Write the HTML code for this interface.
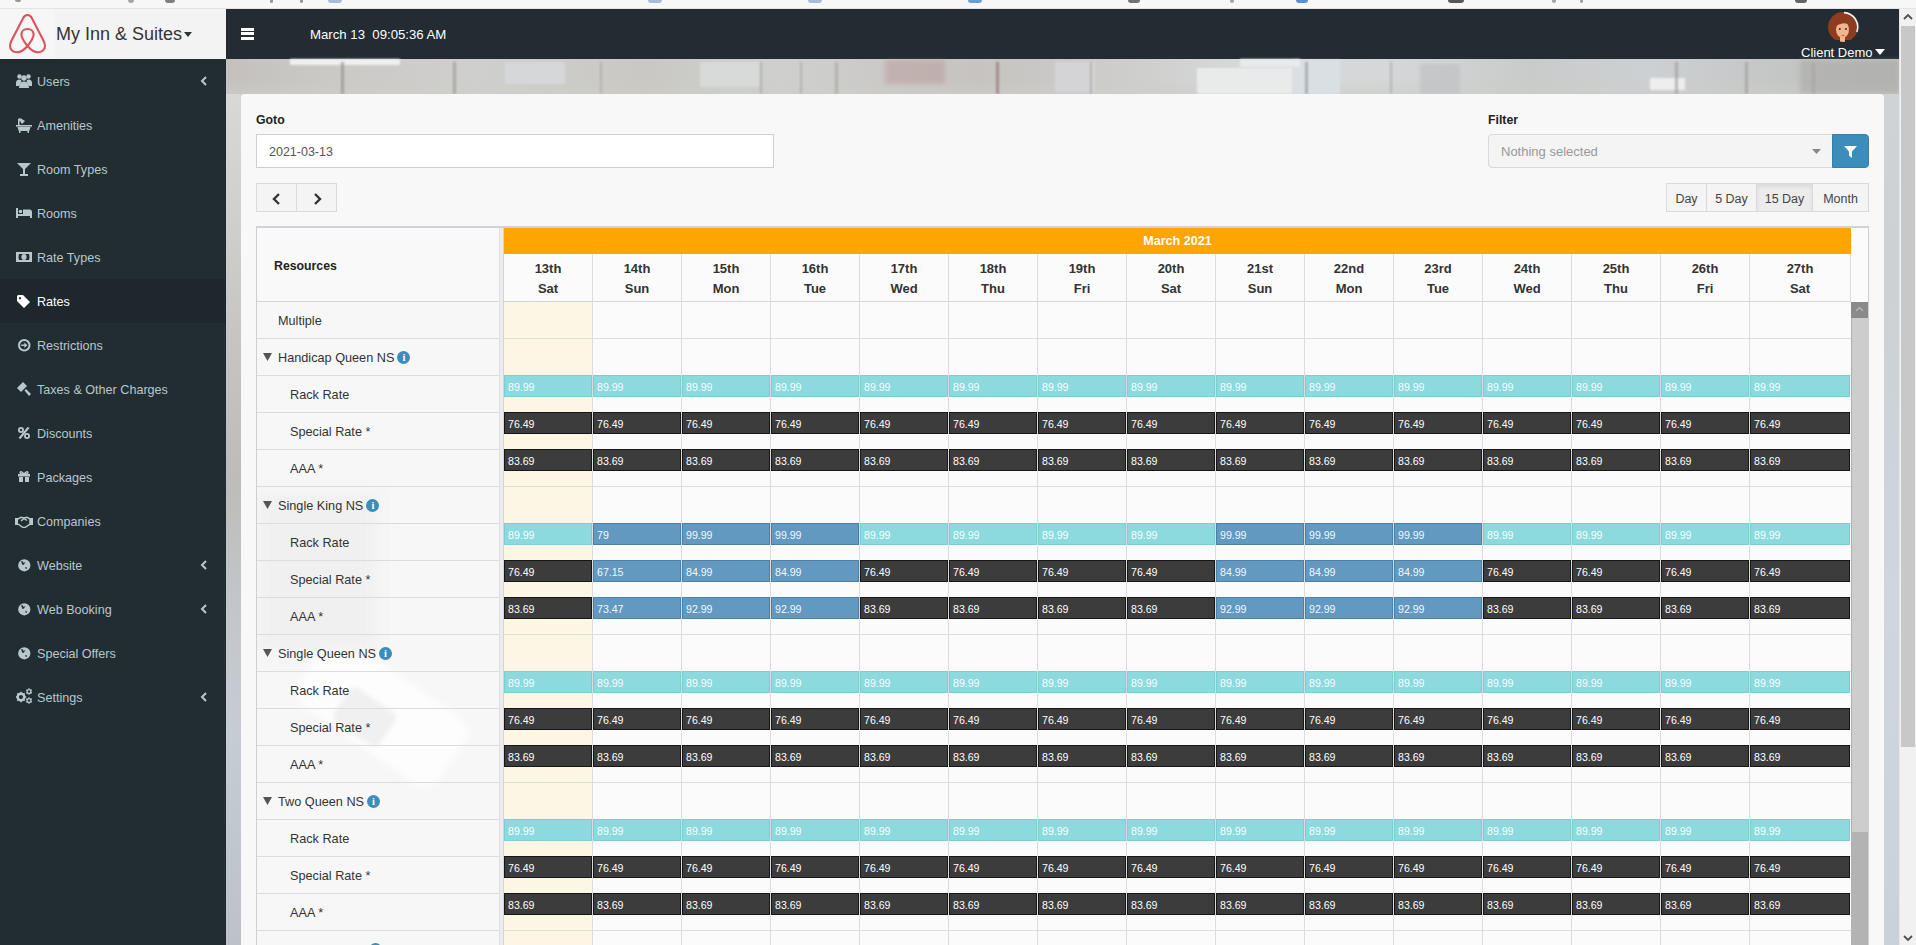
<!DOCTYPE html><html><head><meta charset="utf-8"><style>
*{box-sizing:border-box;margin:0;padding:0}
html,body{width:1916px;height:945px;overflow:hidden;background:#f7f7f7;font-family:"Liberation Sans",sans-serif}
div,span{position:absolute}
.nw{white-space:nowrap}
#topstrip{left:0;top:0;width:1916px;height:9px;background:#f7f7f8}
#logo{left:0;top:9px;width:226px;height:50px;background:#f3f3f4}
#logosq{left:0;top:9px;width:55px;height:50px;background:#f6f6f6}
#brand{left:56px;top:23px;font-size:18px;line-height:22px;color:#333}
#navbar{left:226px;top:9px;width:1673px;height:50px;background:#222c32}
#sidebar{left:0;top:59px;width:226px;height:886px;background:#222d32}
.mi{left:0;width:226px;height:44px;color:#b8c7ce;font-size:12.6px;line-height:16px}
.mi .t{left:37px;top:15px;white-space:nowrap}
.mi svg{position:absolute;left:16px;top:14px}
.mi .ch{left:199px;top:17px}
.mi.act{background:#1e282c;color:#fff}
#bg{left:226px;top:59px;width:1673px;height:886px;background:linear-gradient(90deg,#c6c8c6,#cdd0cf 30%,#c9cbcb 60%,#c8ccd0 100%)}
#panel{left:241px;top:94px;width:1643px;height:851px;background:#f8f8f8;border-radius:3px 3px 0 0}
#sb{left:1899px;top:9px;width:17px;height:936px;background:#f1f1f1;border-left:1px solid #e6e6e6}
#sbthumb{left:1901px;top:26px;width:14px;height:721px;background:#c8c8c8}
.lbl{font-weight:bold;font-size:12.3px;color:#222;line-height:15px}
.btn{background:#f4f4f4;border:1px solid #dadada;color:#444;font-size:12.5px;line-height:30px;text-align:center}
.cell{border-right:1px solid #e3e3e3;border-bottom:1px solid #e3e3e3}
.rt{font-size:12.7px;color:#333;line-height:16px;white-space:nowrap}
.ev{height:22px;font-size:10.6px;line-height:23px;overflow:hidden;padding-left:3px;white-space:nowrap}
.ev.c{background:#8cd9de;border:1px solid #7bcdd2;color:#fafefe}
.ev.d{background:#3c3c3c;border:1px solid #161616;color:#fff}
.ev.b{background:#6299c1;border:1px solid #4c80a8;color:#f4f8fb}
.dh{font-weight:bold;font-size:13px;color:#333;line-height:20px;text-align:center}
</style></head><body>
<div id="topstrip"></div>
<div style="left:165px;top:0;width:10px;height:3px;background:#555;opacity:0.75;border-radius:0 0 3px 3px"></div>
<div style="left:128px;top:0;width:6px;height:3px;background:#888;opacity:0.75;border-radius:0 0 3px 3px"></div>
<div style="left:270px;top:0;width:3px;height:3px;background:#777;opacity:0.75;border-radius:0 0 3px 3px"></div>
<div style="left:300px;top:0;width:3px;height:3px;background:#777;opacity:0.75;border-radius:0 0 3px 3px"></div>
<div style="left:328px;top:0;width:14px;height:3px;background:#8aa8c8;opacity:0.75;border-radius:0 0 3px 3px"></div>
<div style="left:648px;top:0;width:14px;height:3px;background:#8aa8c8;opacity:0.75;border-radius:0 0 3px 3px"></div>
<div style="left:808px;top:0;width:14px;height:3px;background:#8aa8c8;opacity:0.75;border-radius:0 0 3px 3px"></div>
<div style="left:968px;top:0;width:14px;height:3px;background:#3b7fd0;opacity:0.75;border-radius:0 0 3px 3px"></div>
<div style="left:1128px;top:0;width:12px;height:3px;background:#444;opacity:0.75;border-radius:0 0 3px 3px"></div>
<div style="left:1230px;top:0;width:4px;height:3px;background:#888;opacity:0.75;border-radius:0 0 3px 3px"></div>
<div style="left:1296px;top:0;width:12px;height:3px;background:#2a6cc8;opacity:0.75;border-radius:0 0 3px 3px"></div>
<div style="left:1448px;top:0;width:16px;height:3px;background:#222;opacity:0.75;border-radius:0 0 3px 3px"></div>
<div style="left:1552px;top:0;width:4px;height:3px;background:#888;opacity:0.75;border-radius:0 0 3px 3px"></div>
<div style="left:1580px;top:0;width:3px;height:3px;background:#888;opacity:0.75;border-radius:0 0 3px 3px"></div>
<div style="left:1795px;top:0;width:12px;height:3px;background:#333;opacity:0.75;border-radius:0 0 3px 3px"></div>
<div style="left:15px;top:0;width:6px;height:2px;background:#777;opacity:0.75;border-radius:0 0 3px 3px"></div>
<div style="left:0;top:8px;width:1916px;height:1px;background:#e4e4e4"></div>
<div id="logo"></div><div id="logosq"></div>
<svg style="position:absolute;left:8px;top:14px" width="40" height="40" viewBox="0 0 40 40"><path d="M19.5 32 C15.5 27 13.4 23.5 13.4 20.5 C13.4 17 16 15 19.5 15 C23 15 25.6 17 25.6 20.5 C25.6 23.5 23.5 27 19.5 32 C23 36 26 38.3 30 38.3 C34 38.3 37 35.5 37 32 C37 30 36.3 28.3 35.3 26.3 L24.2 4.8 C23.2 2.6 21.6 1 19.5 1 C17.4 1 15.8 2.6 14.8 4.8 L3.7 26.3 C2.7 28.3 2 30 2 32 C2 35.5 5 38.3 9 38.3 C13 38.3 16 36 19.5 32Z" fill="none" stroke="#dc535c" stroke-width="2.1" stroke-linejoin="round"/></svg>
<div id="brand" class="nw">My Inn &amp; Suites</div>
<svg style="position:absolute;left:184px;top:32px" width="8" height="5" viewBox="0 0 8 5"><path d="M0 0 L8 0 L4 5Z" fill="#333"/></svg>
<div id="navbar"></div>
<div style="left:241px;top:28px;width:13px;height:3px;background:#fff"></div><div style="left:241px;top:32px;width:13px;height:3px;background:#fff"></div><div style="left:241px;top:37px;width:13px;height:3px;background:#fff"></div>
<div class="nw" style="left:310px;top:27px;font-size:13.2px;line-height:16px;color:#fff">March 13&nbsp; 09:05:36 AM</div>
<svg style="position:absolute;left:1827px;top:11px" width="32" height="32" viewBox="0 0 32 32"><defs><clipPath id="av"><circle cx="16" cy="16" r="15"/></clipPath></defs><g clip-path="url(#av)"><rect width="32" height="32" fill="#8c3d1d"/><rect x="0" y="29" width="32" height="3" fill="#1e2830"/><ellipse cx="15.5" cy="18.5" rx="6.5" ry="8.5" fill="#f0b48e"/><path d="M8 16 Q9 9 17 8.5 Q24 9.5 24 15 Q21 11.5 15 12.5 Q11 13 8 16Z" fill="#8c3d1d"/><rect x="13" y="25" width="5" height="7" fill="#f0b48e"/><ellipse cx="16" cy="24.5" rx="1.8" ry="0.8" fill="#e06058"/><circle cx="12.8" cy="18" r="0.9" fill="#2a1a10"/><circle cx="19" cy="18" r="0.9" fill="#2a1a10"/></g><path d="M17 1.6 A14.4 14.4 0 0 1 29.8 21" fill="none" stroke="#f4f4f4" stroke-width="1.6"/></svg>
<div class="nw" style="left:1801px;top:45px;font-size:13px;line-height:15px;color:#fff">Client Demo</div>
<svg style="position:absolute;left:1875px;top:49px" width="10" height="6" viewBox="0 0 10 6"><path d="M0 0 L10 0 L5 6Z" fill="#fff"/></svg>
<div id="sidebar"></div>
<div class="mi" style="top:59px"><svg style="position:absolute;left:16px;top:15px" width="16" height="14" viewBox="0 0 16 14"><circle cx="3.5" cy="2.5" r="2.2" fill="currentColor"/><circle cx="12.5" cy="2.5" r="2.2" fill="currentColor"/><circle cx="8" cy="4" r="2.7" fill="currentColor"/><path d="M0 9 Q0 5.5 3.5 5.5 Q5.5 5.5 5.5 7.5 L3 12 L0 12Z" fill="currentColor"/><path d="M16 9 Q16 5.5 12.5 5.5 Q10.5 5.5 10.5 7.5 L13 12 L16 12Z" fill="currentColor"/><path d="M3 14 Q3 7.5 8 7.5 Q13 7.5 13 14Z" fill="currentColor"/></svg><span class="t">Users</span><svg class="ch" width="8" height="10" viewBox="0 0 8 10" style="position:absolute;left:200px;top:17px"><path d="M6 1 L2 5 L6 9" fill="none" stroke="#b8c7ce" stroke-width="2"/></svg></div>
<div class="mi" style="top:103px"><svg style="position:absolute;left:16px;top:15px" width="16" height="15" viewBox="0 0 16 15"><path d="M2 1 Q3 0 5 0.5 L9 3 L6 6 L3.5 2.5 L3.5 7 L2 7Z" fill="currentColor"/><rect x="0" y="7" width="16" height="1.6" fill="currentColor"/><path d="M1.5 9 L14.5 9 L13.5 12.5 Q13 13 11 13 L5 13 Q3 13 2.5 12.5Z" fill="currentColor"/><rect x="3" y="13" width="1.5" height="2" fill="currentColor"/><rect x="11.5" y="13" width="1.5" height="2" fill="currentColor"/></svg><span class="t">Amenities</span></div>
<div class="mi" style="top:147px"><svg style="position:absolute;left:17px;top:16px" width="14" height="13" viewBox="0 0 14 13"><path d="M0 0 L14 0 L8 6 L8 11 L11 11 L11 13 L3 13 L3 11 L6 11 L6 6Z" fill="currentColor"/></svg><span class="t">Room Types</span></div>
<div class="mi" style="top:191px"><svg style="position:absolute;left:16px;top:17px" width="16" height="10" viewBox="0 0 16 10"><rect x="0" y="0" width="2" height="10" fill="currentColor"/><circle cx="4.5" cy="3.5" r="1.8" fill="currentColor"/><path d="M7 1.5 L14 1.5 Q16 1.5 16 4 L16 10 L14 10 L14 8 L2 8 L2 6 L7 6Z" fill="currentColor"/></svg><span class="t">Rooms</span></div>
<div class="mi" style="top:235px"><svg style="position:absolute;left:16px;top:17px" width="16" height="10" viewBox="0 0 16 10"><path fill-rule="evenodd" d="M0 0 L16 0 L16 10 L0 10Z M3 2 Q2 5 3 8 L13 8 Q14 5 13 2Z" fill="currentColor"/><ellipse cx="8" cy="5" rx="2.6" ry="3" fill="currentColor"/></svg><span class="t">Rate Types</span></div>
<div class="mi act" style="top:279px"><svg style="position:absolute;left:17px;top:16px" width="13" height="13" viewBox="0 0 13 13"><path fill-rule="evenodd" d="M0 1.5 Q0 0 1.5 0 L6 0 L13 7 L7 13 L0 6Z M3 2 A1.1 1.1 0 1 0 3.01 2Z" fill="currentColor"/></svg><span class="t">Rates</span></div>
<div class="mi" style="top:323px"><svg style="position:absolute;left:18px;top:16px" width="13" height="13" viewBox="0 0 13 13"><circle cx="6.25" cy="6.25" r="5.25" fill="none" stroke="currentColor" stroke-width="2"/><path d="M3.2 5.4 L6.4 5.4 L6.4 3.4 L9.4 6.25 L6.4 9.1 L6.4 7.1 L3.2 7.1Z" fill="currentColor"/></svg><span class="t">Restrictions</span></div>
<div class="mi" style="top:367px"><svg style="position:absolute;left:17px;top:15px" width="14" height="14" viewBox="0 0 14 14"><path d="M0 6 L6 0 L10 4 L4 10Z" fill="currentColor"/><path d="M7.5 8.5 L9 7 L14 12 L12 14Z" fill="currentColor"/></svg><span class="t">Taxes &amp; Other Charges</span></div>
<div class="mi" style="top:411px"><svg style="position:absolute;left:18px;top:16px" width="12" height="12" viewBox="0 0 12 12"><circle cx="3" cy="3" r="2.1" fill="none" stroke="currentColor" stroke-width="1.8"/><circle cx="9" cy="9" r="2.1" fill="none" stroke="currentColor" stroke-width="1.8"/><path d="M9.5 0 L11.5 1 L2.5 12 L0.5 11Z" fill="currentColor"/></svg><span class="t">Discounts</span></div>
<div class="mi" style="top:455px"><svg style="position:absolute;left:18px;top:16px" width="12" height="11" viewBox="0 0 12 11"><path d="M0 3 L12 3 L12 5.5 L0 5.5Z M1 6 L5 6 L5 11 L1 11Z M7 6 L11 6 L11 11 L7 11Z" fill="currentColor"/><path d="M6 3 Q3 -0.5 2 1.5 Q2 3 6 3 Q10 3 10 1.5 Q9 -0.5 6 3" fill="none" stroke="currentColor" stroke-width="1.3"/></svg><span class="t">Packages</span></div>
<div class="mi" style="top:499px"><svg style="position:absolute;left:15px;top:17px" width="18" height="12" viewBox="0 0 18 12"><path d="M0 2 L3 2 L3 9 L0 9Z M15 2 L18 2 L18 9 L15 9Z" fill="currentColor"/><path d="M3 3 L6 1.2 L9 2 L12 1.2 L15 3 L15 8 L10 11.5 L8 11.5 L3 8" fill="none" stroke="currentColor" stroke-width="1.5"/><path d="M6 5 L9 2.5 L12 4.5" fill="none" stroke="currentColor" stroke-width="1.5"/></svg><span class="t">Companies</span></div>
<div class="mi" style="top:543px"><svg style="position:absolute;left:18px;top:16px" width="13" height="13" viewBox="0 0 13 13"><circle cx="6.3" cy="6.3" r="6.1" fill="currentColor"/><path d="M3 2.5 Q4 2 5 2.5 L5.5 4 Q6.5 3.5 7.5 3 L6 5.5 L4.5 6 Z M7 8.5 L8.5 8 L9 9.5 L8 10Z" fill="#222d32"/></svg><span class="t">Website</span><svg class="ch" width="8" height="10" viewBox="0 0 8 10" style="position:absolute;left:200px;top:17px"><path d="M6 1 L2 5 L6 9" fill="none" stroke="#b8c7ce" stroke-width="2"/></svg></div>
<div class="mi" style="top:587px"><svg style="position:absolute;left:18px;top:16px" width="13" height="13" viewBox="0 0 13 13"><circle cx="6.3" cy="6.3" r="6.1" fill="currentColor"/><path d="M3 2.5 Q4 2 5 2.5 L5.5 4 Q6.5 3.5 7.5 3 L6 5.5 L4.5 6 Z M7 8.5 L8.5 8 L9 9.5 L8 10Z" fill="#222d32"/></svg><span class="t">Web Booking</span><svg class="ch" width="8" height="10" viewBox="0 0 8 10" style="position:absolute;left:200px;top:17px"><path d="M6 1 L2 5 L6 9" fill="none" stroke="#b8c7ce" stroke-width="2"/></svg></div>
<div class="mi" style="top:631px"><svg style="position:absolute;left:18px;top:16px" width="13" height="13" viewBox="0 0 13 13"><circle cx="6.3" cy="6.3" r="6.1" fill="currentColor"/><path d="M3 2.5 Q4 2 5 2.5 L5.5 4 Q6.5 3.5 7.5 3 L6 5.5 L4.5 6 Z M7 8.5 L8.5 8 L9 9.5 L8 10Z" fill="#222d32"/></svg><span class="t">Special Offers</span></div>
<div class="mi" style="top:675px"><svg style="position:absolute;left:16px;top:13px" width="16" height="17" viewBox="0 0 16 17"><g transform="translate(0,4)"><rect x="4.2" y="-0.2" width="1.6" height="2.6" fill="currentColor" transform="rotate(0 5 5)"/><rect x="4.2" y="-0.2" width="1.6" height="2.6" fill="currentColor" transform="rotate(45 5 5)"/><rect x="4.2" y="-0.2" width="1.6" height="2.6" fill="currentColor" transform="rotate(90 5 5)"/><rect x="4.2" y="-0.2" width="1.6" height="2.6" fill="currentColor" transform="rotate(135 5 5)"/><rect x="4.2" y="-0.2" width="1.6" height="2.6" fill="currentColor" transform="rotate(180 5 5)"/><rect x="4.2" y="-0.2" width="1.6" height="2.6" fill="currentColor" transform="rotate(225 5 5)"/><rect x="4.2" y="-0.2" width="1.6" height="2.6" fill="currentColor" transform="rotate(270 5 5)"/><rect x="4.2" y="-0.2" width="1.6" height="2.6" fill="currentColor" transform="rotate(315 5 5)"/><circle cx="5" cy="5" r="3.3" fill="none" stroke="currentColor" stroke-width="2.4"/></g><rect x="12.4" y="0.20000000000000018" width="1.2" height="1.8" fill="currentColor" transform="rotate(0 13 3.5)"/><rect x="12.4" y="0.20000000000000018" width="1.2" height="1.8" fill="currentColor" transform="rotate(60 13 3.5)"/><rect x="12.4" y="0.20000000000000018" width="1.2" height="1.8" fill="currentColor" transform="rotate(120 13 3.5)"/><rect x="12.4" y="0.20000000000000018" width="1.2" height="1.8" fill="currentColor" transform="rotate(180 13 3.5)"/><rect x="12.4" y="0.20000000000000018" width="1.2" height="1.8" fill="currentColor" transform="rotate(240 13 3.5)"/><rect x="12.4" y="0.20000000000000018" width="1.2" height="1.8" fill="currentColor" transform="rotate(300 13 3.5)"/><circle cx="13" cy="3.5" r="1.9" fill="none" stroke="currentColor" stroke-width="1.3"/><rect x="12.4" y="9.2" width="1.2" height="1.8" fill="currentColor" transform="rotate(0 13 12.5)"/><rect x="12.4" y="9.2" width="1.2" height="1.8" fill="currentColor" transform="rotate(60 13 12.5)"/><rect x="12.4" y="9.2" width="1.2" height="1.8" fill="currentColor" transform="rotate(120 13 12.5)"/><rect x="12.4" y="9.2" width="1.2" height="1.8" fill="currentColor" transform="rotate(180 13 12.5)"/><rect x="12.4" y="9.2" width="1.2" height="1.8" fill="currentColor" transform="rotate(240 13 12.5)"/><rect x="12.4" y="9.2" width="1.2" height="1.8" fill="currentColor" transform="rotate(300 13 12.5)"/><circle cx="13" cy="12.5" r="1.9" fill="none" stroke="currentColor" stroke-width="1.3"/></svg><span class="t">Settings</span><svg class="ch" width="8" height="10" viewBox="0 0 8 10" style="position:absolute;left:200px;top:17px"><path d="M6 1 L2 5 L6 9" fill="none" stroke="#b8c7ce" stroke-width="2"/></svg></div>
<div id="bg"></div>
<div style="left:226px;top:59px;width:1673px;height:35px;background:linear-gradient(90deg,#c3c0bd 0%,#cbc9c6 6%,#cfcfcd 15%,#c9c8c4 25%,#cfd0ce 33%,#c6c3c0 45%,#cfcfce 55%,#d8dadb 62%,#d4d6d7 70%,#c9cbcb 78%,#cdd0d2 85%,#c4c6c6 93%,#bdbfbf 100%)"></div>
<div style="left:226px;top:80px;width:1673px;height:14px;background:linear-gradient(180deg,rgba(200,200,195,0),rgba(205,205,200,0.6))"></div>
<div style="left:290px;top:59px;width:110px;height:6px;background:#eef0f2;filter:blur(1px)"></div>
<div style="left:1197px;top:68px;width:96px;height:26px;background:#e9ebeb;filter:blur(1px)"></div>
<div style="left:1293px;top:60px;width:47px;height:34px;background:#dadfe3;filter:blur(1px)"></div>
<div style="left:1240px;top:59px;width:60px;height:8px;background:#e8eaec;filter:blur(1px)"></div>
<div style="left:1055px;top:62px;width:40px;height:30px;background:#d4d4d6;filter:blur(1px)"></div>
<div style="left:1650px;top:78px;width:35px;height:12px;background:#eeeeef;filter:blur(1px)"></div>
<div style="left:700px;top:62px;width:60px;height:25px;background:#d8d9d9;filter:blur(1px)"></div>
<div style="left:505px;top:62px;width:60px;height:22px;background:#d6d7d8;filter:blur(1px)"></div>
<div style="left:885px;top:60px;width:60px;height:24px;background:#b08a88;opacity:0.35;filter:blur(2px)"></div>
<div style="left:1420px;top:64px;width:40px;height:30px;background:#c0c2c4;opacity:0.7;filter:blur(1.5px)"></div>
<div style="left:341px;top:62px;width:3px;height:32px;background:#8a8580;opacity:0.6;filter:blur(0.8px)"></div>
<div style="left:453px;top:62px;width:3px;height:32px;background:#948f8a;opacity:0.6;filter:blur(0.8px)"></div>
<div style="left:600px;top:62px;width:2px;height:32px;background:#a8a4a0;opacity:0.6;filter:blur(0.8px)"></div>
<div style="left:760px;top:62px;width:2px;height:32px;background:#a09c98;opacity:0.6;filter:blur(0.8px)"></div>
<div style="left:800px;top:62px;width:2px;height:32px;background:#a6a29e;opacity:0.6;filter:blur(0.8px)"></div>
<div style="left:835px;top:62px;width:3px;height:32px;background:#a5a09c;opacity:0.6;filter:blur(0.8px)"></div>
<div style="left:996px;top:62px;width:3px;height:32px;background:#8a6a64;opacity:0.6;filter:blur(0.8px)"></div>
<div style="left:1090px;top:62px;width:2px;height:32px;background:#a09c98;opacity:0.6;filter:blur(0.8px)"></div>
<div style="left:1305px;top:62px;width:3px;height:32px;background:#8f8f8f;opacity:0.6;filter:blur(0.8px)"></div>
<div style="left:1390px;top:62px;width:2px;height:32px;background:#a0a0a0;opacity:0.6;filter:blur(0.8px)"></div>
<div style="left:1675px;top:62px;width:3px;height:32px;background:#9a9693;opacity:0.6;filter:blur(0.8px)"></div>
<div style="left:1745px;top:62px;width:3px;height:32px;background:#9a9693;opacity:0.6;filter:blur(0.8px)"></div>
<div style="left:1812px;top:62px;width:3px;height:32px;background:#a0a0a0;opacity:0.6;filter:blur(0.8px)"></div>
<div style="left:1800px;top:60px;width:99px;height:34px;background:#a9a7a4;opacity:0.55;filter:blur(2px)"></div>
<div style="left:226px;top:94px;width:15px;height:851px;background:linear-gradient(180deg,#d8d8d6 0%,#cfcfcd 15%,#c5c4c0 30%,#bdbcb8 45%,#c2c6ca 60%,#c6ccd3 75%,#c0c6cd 90%,#bcc2c8 100%)"></div>
<div style="left:1884px;top:94px;width:15px;height:851px;background:linear-gradient(180deg,#d0d3d5 0%,#cdd1d4 20%,#cdd3d8 40%,#d0d6db 60%,#cdd4db 80%,#cad1d8 100%)"></div>
<div id="panel"></div>
<div class="lbl nw" style="left:256px;top:113px">Goto</div>
<div style="left:256px;top:134px;width:518px;height:34px;background:#fff;border:1px solid #d0d0d0"></div>
<div class="nw" style="left:269px;top:144px;font-size:12.5px;line-height:16px;color:#555">2021-03-13</div>
<div class="btn" style="left:256px;top:183px;width:41px;height:29px"></div><div class="btn" style="left:296px;top:183px;width:41px;height:29px"></div>
<svg style="position:absolute;left:272px;top:193px" width="9" height="12" viewBox="0 0 9 12"><path d="M7 1 L2 6 L7 11" fill="none" stroke="#333" stroke-width="2.4"/></svg>
<svg style="position:absolute;left:313px;top:193px" width="9" height="12" viewBox="0 0 9 12"><path d="M2 1 L7 6 L2 11" fill="none" stroke="#333" stroke-width="2.4"/></svg>
<div class="lbl nw" style="left:1488px;top:113px">Filter</div>
<div style="left:1488px;top:134px;width:345px;height:34px;background:#f4f4f4;border:1px solid #d8d8d8;border-radius:4px 0 0 4px"></div>
<div class="nw" style="left:1501px;top:144px;font-size:13px;line-height:16px;color:#999">Nothing selected</div>
<svg style="position:absolute;left:1812px;top:149px" width="9" height="5" viewBox="0 0 9 5"><path d="M0 0 L9 0 L4.5 5Z" fill="#888"/></svg>
<div style="left:1832px;top:134px;width:37px;height:34px;background:#3c8dbc;border:1px solid #367fa9;border-radius:0 4px 4px 0"></div>
<svg style="position:absolute;left:1844px;top:146px" width="13" height="12" viewBox="0 0 13 12"><path d="M0 0 L13 0 L8 5.5 L8 12 L5 9.5 L5 5.5Z" fill="#fff"/></svg>
<div class="btn nw" style="left:1666px;top:183px;width:41px;height:29px;">Day</div>
<div class="btn nw" style="left:1706px;top:183px;width:51px;height:29px;">5 Day</div>
<div class="btn nw" style="left:1756px;top:183px;width:57px;height:29px;background:#ececec;box-shadow:inset 0 3px 4px rgba(0,0,0,0.07);">15 Day</div>
<div class="btn nw" style="left:1812px;top:183px;width:57px;height:29px;">Month</div>
<div style="left:256px;top:226px;width:1613px;height:730px;background:#fbfbfb;border:1px solid #cfcfcf;border-top:2px solid #d2d2d8"></div>
<div style="left:257px;top:302px;width:242px;height:643px;background:#f7f7f7"></div>
<div style="left:257px;top:302px;width:242px;height:643px;overflow:hidden"><div style="left:40px;top:370px;width:170px;height:80px;border-radius:18px;background:#fdfdfd;transform:rotate(35deg);filter:blur(3px)"></div><div style="left:80px;top:395px;width:55px;height:40px;border-radius:6px;background:#f0f0f0;transform:rotate(35deg);filter:blur(2px)"></div><div style="left:0px;top:190px;width:120px;height:160px;background:#f0f0f0;filter:blur(8px)"></div></div>
<div style="left:257px;top:228px;width:242px;height:74px;background:#f9f9f9;border-bottom:1px solid #d6d6d6"></div>
<div class="lbl nw" style="left:274px;top:259px;font-size:12.3px">Resources</div>
<div style="left:499px;top:228px;width:5px;height:717px;background:#ebebf0;border-left:1px solid #e0e0e4;border-right:1px solid #d4d4d8"></div>
<div class="nw" style="left:504px;top:228px;width:1347px;height:26px;background:#ffa500;color:#fff;font-size:12.6px;font-weight:bold;line-height:27px;text-align:center">March 2021</div>
<div class="dh" style="left:504px;top:254px;width:89px;height:48px;border-right:1px solid #dcdcdc;border-bottom:1px solid #d6d6d6;padding-top:5px">13th<br>Sat</div>
<div class="dh" style="left:593px;top:254px;width:89px;height:48px;border-right:1px solid #dcdcdc;border-bottom:1px solid #d6d6d6;padding-top:5px">14th<br>Sun</div>
<div class="dh" style="left:682px;top:254px;width:89px;height:48px;border-right:1px solid #dcdcdc;border-bottom:1px solid #d6d6d6;padding-top:5px">15th<br>Mon</div>
<div class="dh" style="left:771px;top:254px;width:89px;height:48px;border-right:1px solid #dcdcdc;border-bottom:1px solid #d6d6d6;padding-top:5px">16th<br>Tue</div>
<div class="dh" style="left:860px;top:254px;width:89px;height:48px;border-right:1px solid #dcdcdc;border-bottom:1px solid #d6d6d6;padding-top:5px">17th<br>Wed</div>
<div class="dh" style="left:949px;top:254px;width:89px;height:48px;border-right:1px solid #dcdcdc;border-bottom:1px solid #d6d6d6;padding-top:5px">18th<br>Thu</div>
<div class="dh" style="left:1038px;top:254px;width:89px;height:48px;border-right:1px solid #dcdcdc;border-bottom:1px solid #d6d6d6;padding-top:5px">19th<br>Fri</div>
<div class="dh" style="left:1127px;top:254px;width:89px;height:48px;border-right:1px solid #dcdcdc;border-bottom:1px solid #d6d6d6;padding-top:5px">20th<br>Sat</div>
<div class="dh" style="left:1216px;top:254px;width:89px;height:48px;border-right:1px solid #dcdcdc;border-bottom:1px solid #d6d6d6;padding-top:5px">21st<br>Sun</div>
<div class="dh" style="left:1305px;top:254px;width:89px;height:48px;border-right:1px solid #dcdcdc;border-bottom:1px solid #d6d6d6;padding-top:5px">22nd<br>Mon</div>
<div class="dh" style="left:1394px;top:254px;width:89px;height:48px;border-right:1px solid #dcdcdc;border-bottom:1px solid #d6d6d6;padding-top:5px">23rd<br>Tue</div>
<div class="dh" style="left:1483px;top:254px;width:89px;height:48px;border-right:1px solid #dcdcdc;border-bottom:1px solid #d6d6d6;padding-top:5px">24th<br>Wed</div>
<div class="dh" style="left:1572px;top:254px;width:89px;height:48px;border-right:1px solid #dcdcdc;border-bottom:1px solid #d6d6d6;padding-top:5px">25th<br>Thu</div>
<div class="dh" style="left:1661px;top:254px;width:89px;height:48px;border-right:1px solid #dcdcdc;border-bottom:1px solid #d6d6d6;padding-top:5px">26th<br>Fri</div>
<div class="dh" style="left:1750px;top:254px;width:101px;height:48px;border-right:1px solid #dcdcdc;border-bottom:1px solid #d6d6d6;padding-top:5px">27th<br>Sat</div>
<div style="left:504px;top:302px;width:88px;height:643px;background:#fcf6e4"></div>
<div style="left:257px;top:338px;width:242px;height:1px;background:#dcdcdc"></div>
<div style="left:504px;top:338px;width:1347px;height:1px;background:#dedede"></div>
<div class="rt" style="left:278px;top:313px">Multiple</div>
<div style="left:257px;top:375px;width:242px;height:1px;background:#dcdcdc"></div>
<div style="left:504px;top:375px;width:1347px;height:1px;background:#dedede"></div>
<svg style="position:absolute;left:263px;top:353px" width="9" height="8" viewBox="0 0 9 8"><path d="M0 0 L9 0 L4.5 8Z" fill="#555"/></svg>
<div class="rt" style="left:278px;top:350px">Handicap Queen NS<span style="position:relative;display:inline-block;width:13px;height:13px;border-radius:50%;background:#3c8dbc;margin-left:3px;top:-1px;color:#fff;font-size:10.5px;line-height:13px;text-align:center;font-weight:bold;font-family:'Liberation Serif',serif">i</span></div>
<div style="left:257px;top:412px;width:242px;height:1px;background:#dcdcdc"></div>
<div style="left:504px;top:412px;width:1347px;height:1px;background:#dedede"></div>
<div class="rt" style="left:290px;top:387px">Rack Rate</div>
<div style="left:257px;top:449px;width:242px;height:1px;background:#dcdcdc"></div>
<div style="left:504px;top:449px;width:1347px;height:1px;background:#dedede"></div>
<div class="rt" style="left:290px;top:424px">Special Rate *</div>
<div style="left:257px;top:486px;width:242px;height:1px;background:#dcdcdc"></div>
<div style="left:504px;top:486px;width:1347px;height:1px;background:#dedede"></div>
<div class="rt" style="left:290px;top:461px">AAA *</div>
<div style="left:257px;top:523px;width:242px;height:1px;background:#dcdcdc"></div>
<div style="left:504px;top:523px;width:1347px;height:1px;background:#dedede"></div>
<svg style="position:absolute;left:263px;top:501px" width="9" height="8" viewBox="0 0 9 8"><path d="M0 0 L9 0 L4.5 8Z" fill="#555"/></svg>
<div class="rt" style="left:278px;top:498px">Single King NS<span style="position:relative;display:inline-block;width:13px;height:13px;border-radius:50%;background:#3c8dbc;margin-left:3px;top:-1px;color:#fff;font-size:10.5px;line-height:13px;text-align:center;font-weight:bold;font-family:'Liberation Serif',serif">i</span></div>
<div style="left:257px;top:560px;width:242px;height:1px;background:#dcdcdc"></div>
<div style="left:504px;top:560px;width:1347px;height:1px;background:#dedede"></div>
<div class="rt" style="left:290px;top:535px">Rack Rate</div>
<div style="left:257px;top:597px;width:242px;height:1px;background:#dcdcdc"></div>
<div style="left:504px;top:597px;width:1347px;height:1px;background:#dedede"></div>
<div class="rt" style="left:290px;top:572px">Special Rate *</div>
<div style="left:257px;top:634px;width:242px;height:1px;background:#dcdcdc"></div>
<div style="left:504px;top:634px;width:1347px;height:1px;background:#dedede"></div>
<div class="rt" style="left:290px;top:609px">AAA *</div>
<div style="left:257px;top:671px;width:242px;height:1px;background:#dcdcdc"></div>
<div style="left:504px;top:671px;width:1347px;height:1px;background:#dedede"></div>
<svg style="position:absolute;left:263px;top:649px" width="9" height="8" viewBox="0 0 9 8"><path d="M0 0 L9 0 L4.5 8Z" fill="#555"/></svg>
<div class="rt" style="left:278px;top:646px">Single Queen NS<span style="position:relative;display:inline-block;width:13px;height:13px;border-radius:50%;background:#3c8dbc;margin-left:3px;top:-1px;color:#fff;font-size:10.5px;line-height:13px;text-align:center;font-weight:bold;font-family:'Liberation Serif',serif">i</span></div>
<div style="left:257px;top:708px;width:242px;height:1px;background:#dcdcdc"></div>
<div style="left:504px;top:708px;width:1347px;height:1px;background:#dedede"></div>
<div class="rt" style="left:290px;top:683px">Rack Rate</div>
<div style="left:257px;top:745px;width:242px;height:1px;background:#dcdcdc"></div>
<div style="left:504px;top:745px;width:1347px;height:1px;background:#dedede"></div>
<div class="rt" style="left:290px;top:720px">Special Rate *</div>
<div style="left:257px;top:782px;width:242px;height:1px;background:#dcdcdc"></div>
<div style="left:504px;top:782px;width:1347px;height:1px;background:#dedede"></div>
<div class="rt" style="left:290px;top:757px">AAA *</div>
<div style="left:257px;top:819px;width:242px;height:1px;background:#dcdcdc"></div>
<div style="left:504px;top:819px;width:1347px;height:1px;background:#dedede"></div>
<svg style="position:absolute;left:263px;top:797px" width="9" height="8" viewBox="0 0 9 8"><path d="M0 0 L9 0 L4.5 8Z" fill="#555"/></svg>
<div class="rt" style="left:278px;top:794px">Two Queen NS<span style="position:relative;display:inline-block;width:13px;height:13px;border-radius:50%;background:#3c8dbc;margin-left:3px;top:-1px;color:#fff;font-size:10.5px;line-height:13px;text-align:center;font-weight:bold;font-family:'Liberation Serif',serif">i</span></div>
<div style="left:257px;top:856px;width:242px;height:1px;background:#dcdcdc"></div>
<div style="left:504px;top:856px;width:1347px;height:1px;background:#dedede"></div>
<div class="rt" style="left:290px;top:831px">Rack Rate</div>
<div style="left:257px;top:893px;width:242px;height:1px;background:#dcdcdc"></div>
<div style="left:504px;top:893px;width:1347px;height:1px;background:#dedede"></div>
<div class="rt" style="left:290px;top:868px">Special Rate *</div>
<div style="left:257px;top:930px;width:242px;height:1px;background:#dcdcdc"></div>
<div style="left:504px;top:930px;width:1347px;height:1px;background:#dedede"></div>
<div class="rt" style="left:290px;top:905px">AAA *</div>
<div style="left:257px;top:967px;width:242px;height:1px;background:#dcdcdc"></div>
<div style="left:504px;top:967px;width:1347px;height:1px;background:#dedede"></div>
<svg style="position:absolute;left:263px;top:945px" width="9" height="8" viewBox="0 0 9 8"><path d="M0 0 L9 0 L4.5 8Z" fill="#555"/></svg>
<div class="rt" style="left:278px;top:942px">Two Double NS<span style="position:relative;display:inline-block;width:13px;height:13px;border-radius:50%;background:#3c8dbc;margin-left:3px;top:-1px;color:#fff;font-size:10.5px;line-height:13px;text-align:center;font-weight:bold;font-family:'Liberation Serif',serif">i</span></div>
<div style="left:592px;top:302px;width:1px;height:643px;background:#dcdcdc"></div>
<div style="left:681px;top:302px;width:1px;height:643px;background:#dcdcdc"></div>
<div style="left:770px;top:302px;width:1px;height:643px;background:#dcdcdc"></div>
<div style="left:859px;top:302px;width:1px;height:643px;background:#dcdcdc"></div>
<div style="left:948px;top:302px;width:1px;height:643px;background:#dcdcdc"></div>
<div style="left:1037px;top:302px;width:1px;height:643px;background:#dcdcdc"></div>
<div style="left:1126px;top:302px;width:1px;height:643px;background:#dcdcdc"></div>
<div style="left:1215px;top:302px;width:1px;height:643px;background:#dcdcdc"></div>
<div style="left:1304px;top:302px;width:1px;height:643px;background:#dcdcdc"></div>
<div style="left:1393px;top:302px;width:1px;height:643px;background:#dcdcdc"></div>
<div style="left:1482px;top:302px;width:1px;height:643px;background:#dcdcdc"></div>
<div style="left:1571px;top:302px;width:1px;height:643px;background:#dcdcdc"></div>
<div style="left:1660px;top:302px;width:1px;height:643px;background:#dcdcdc"></div>
<div style="left:1749px;top:302px;width:1px;height:643px;background:#dcdcdc"></div>
<div class="ev c" style="left:504px;top:375px;width:88px">89.99</div>
<div class="ev c" style="left:593px;top:375px;width:88px">89.99</div>
<div class="ev c" style="left:682px;top:375px;width:88px">89.99</div>
<div class="ev c" style="left:771px;top:375px;width:88px">89.99</div>
<div class="ev c" style="left:860px;top:375px;width:88px">89.99</div>
<div class="ev c" style="left:949px;top:375px;width:88px">89.99</div>
<div class="ev c" style="left:1038px;top:375px;width:88px">89.99</div>
<div class="ev c" style="left:1127px;top:375px;width:88px">89.99</div>
<div class="ev c" style="left:1216px;top:375px;width:88px">89.99</div>
<div class="ev c" style="left:1305px;top:375px;width:88px">89.99</div>
<div class="ev c" style="left:1394px;top:375px;width:88px">89.99</div>
<div class="ev c" style="left:1483px;top:375px;width:88px">89.99</div>
<div class="ev c" style="left:1572px;top:375px;width:88px">89.99</div>
<div class="ev c" style="left:1661px;top:375px;width:88px">89.99</div>
<div class="ev c" style="left:1750px;top:375px;width:100px">89.99</div>
<div class="ev d" style="left:504px;top:412px;width:88px">76.49</div>
<div class="ev d" style="left:593px;top:412px;width:88px">76.49</div>
<div class="ev d" style="left:682px;top:412px;width:88px">76.49</div>
<div class="ev d" style="left:771px;top:412px;width:88px">76.49</div>
<div class="ev d" style="left:860px;top:412px;width:88px">76.49</div>
<div class="ev d" style="left:949px;top:412px;width:88px">76.49</div>
<div class="ev d" style="left:1038px;top:412px;width:88px">76.49</div>
<div class="ev d" style="left:1127px;top:412px;width:88px">76.49</div>
<div class="ev d" style="left:1216px;top:412px;width:88px">76.49</div>
<div class="ev d" style="left:1305px;top:412px;width:88px">76.49</div>
<div class="ev d" style="left:1394px;top:412px;width:88px">76.49</div>
<div class="ev d" style="left:1483px;top:412px;width:88px">76.49</div>
<div class="ev d" style="left:1572px;top:412px;width:88px">76.49</div>
<div class="ev d" style="left:1661px;top:412px;width:88px">76.49</div>
<div class="ev d" style="left:1750px;top:412px;width:100px">76.49</div>
<div class="ev d" style="left:504px;top:449px;width:88px">83.69</div>
<div class="ev d" style="left:593px;top:449px;width:88px">83.69</div>
<div class="ev d" style="left:682px;top:449px;width:88px">83.69</div>
<div class="ev d" style="left:771px;top:449px;width:88px">83.69</div>
<div class="ev d" style="left:860px;top:449px;width:88px">83.69</div>
<div class="ev d" style="left:949px;top:449px;width:88px">83.69</div>
<div class="ev d" style="left:1038px;top:449px;width:88px">83.69</div>
<div class="ev d" style="left:1127px;top:449px;width:88px">83.69</div>
<div class="ev d" style="left:1216px;top:449px;width:88px">83.69</div>
<div class="ev d" style="left:1305px;top:449px;width:88px">83.69</div>
<div class="ev d" style="left:1394px;top:449px;width:88px">83.69</div>
<div class="ev d" style="left:1483px;top:449px;width:88px">83.69</div>
<div class="ev d" style="left:1572px;top:449px;width:88px">83.69</div>
<div class="ev d" style="left:1661px;top:449px;width:88px">83.69</div>
<div class="ev d" style="left:1750px;top:449px;width:100px">83.69</div>
<div class="ev c" style="left:504px;top:523px;width:88px">89.99</div>
<div class="ev b" style="left:593px;top:523px;width:88px">79</div>
<div class="ev b" style="left:682px;top:523px;width:88px">99.99</div>
<div class="ev b" style="left:771px;top:523px;width:88px">99.99</div>
<div class="ev c" style="left:860px;top:523px;width:88px">89.99</div>
<div class="ev c" style="left:949px;top:523px;width:88px">89.99</div>
<div class="ev c" style="left:1038px;top:523px;width:88px">89.99</div>
<div class="ev c" style="left:1127px;top:523px;width:88px">89.99</div>
<div class="ev b" style="left:1216px;top:523px;width:88px">99.99</div>
<div class="ev b" style="left:1305px;top:523px;width:88px">99.99</div>
<div class="ev b" style="left:1394px;top:523px;width:88px">99.99</div>
<div class="ev c" style="left:1483px;top:523px;width:88px">89.99</div>
<div class="ev c" style="left:1572px;top:523px;width:88px">89.99</div>
<div class="ev c" style="left:1661px;top:523px;width:88px">89.99</div>
<div class="ev c" style="left:1750px;top:523px;width:100px">89.99</div>
<div class="ev d" style="left:504px;top:560px;width:88px">76.49</div>
<div class="ev b" style="left:593px;top:560px;width:88px">67.15</div>
<div class="ev b" style="left:682px;top:560px;width:88px">84.99</div>
<div class="ev b" style="left:771px;top:560px;width:88px">84.99</div>
<div class="ev d" style="left:860px;top:560px;width:88px">76.49</div>
<div class="ev d" style="left:949px;top:560px;width:88px">76.49</div>
<div class="ev d" style="left:1038px;top:560px;width:88px">76.49</div>
<div class="ev d" style="left:1127px;top:560px;width:88px">76.49</div>
<div class="ev b" style="left:1216px;top:560px;width:88px">84.99</div>
<div class="ev b" style="left:1305px;top:560px;width:88px">84.99</div>
<div class="ev b" style="left:1394px;top:560px;width:88px">84.99</div>
<div class="ev d" style="left:1483px;top:560px;width:88px">76.49</div>
<div class="ev d" style="left:1572px;top:560px;width:88px">76.49</div>
<div class="ev d" style="left:1661px;top:560px;width:88px">76.49</div>
<div class="ev d" style="left:1750px;top:560px;width:100px">76.49</div>
<div class="ev d" style="left:504px;top:597px;width:88px">83.69</div>
<div class="ev b" style="left:593px;top:597px;width:88px">73.47</div>
<div class="ev b" style="left:682px;top:597px;width:88px">92.99</div>
<div class="ev b" style="left:771px;top:597px;width:88px">92.99</div>
<div class="ev d" style="left:860px;top:597px;width:88px">83.69</div>
<div class="ev d" style="left:949px;top:597px;width:88px">83.69</div>
<div class="ev d" style="left:1038px;top:597px;width:88px">83.69</div>
<div class="ev d" style="left:1127px;top:597px;width:88px">83.69</div>
<div class="ev b" style="left:1216px;top:597px;width:88px">92.99</div>
<div class="ev b" style="left:1305px;top:597px;width:88px">92.99</div>
<div class="ev b" style="left:1394px;top:597px;width:88px">92.99</div>
<div class="ev d" style="left:1483px;top:597px;width:88px">83.69</div>
<div class="ev d" style="left:1572px;top:597px;width:88px">83.69</div>
<div class="ev d" style="left:1661px;top:597px;width:88px">83.69</div>
<div class="ev d" style="left:1750px;top:597px;width:100px">83.69</div>
<div class="ev c" style="left:504px;top:671px;width:88px">89.99</div>
<div class="ev c" style="left:593px;top:671px;width:88px">89.99</div>
<div class="ev c" style="left:682px;top:671px;width:88px">89.99</div>
<div class="ev c" style="left:771px;top:671px;width:88px">89.99</div>
<div class="ev c" style="left:860px;top:671px;width:88px">89.99</div>
<div class="ev c" style="left:949px;top:671px;width:88px">89.99</div>
<div class="ev c" style="left:1038px;top:671px;width:88px">89.99</div>
<div class="ev c" style="left:1127px;top:671px;width:88px">89.99</div>
<div class="ev c" style="left:1216px;top:671px;width:88px">89.99</div>
<div class="ev c" style="left:1305px;top:671px;width:88px">89.99</div>
<div class="ev c" style="left:1394px;top:671px;width:88px">89.99</div>
<div class="ev c" style="left:1483px;top:671px;width:88px">89.99</div>
<div class="ev c" style="left:1572px;top:671px;width:88px">89.99</div>
<div class="ev c" style="left:1661px;top:671px;width:88px">89.99</div>
<div class="ev c" style="left:1750px;top:671px;width:100px">89.99</div>
<div class="ev d" style="left:504px;top:708px;width:88px">76.49</div>
<div class="ev d" style="left:593px;top:708px;width:88px">76.49</div>
<div class="ev d" style="left:682px;top:708px;width:88px">76.49</div>
<div class="ev d" style="left:771px;top:708px;width:88px">76.49</div>
<div class="ev d" style="left:860px;top:708px;width:88px">76.49</div>
<div class="ev d" style="left:949px;top:708px;width:88px">76.49</div>
<div class="ev d" style="left:1038px;top:708px;width:88px">76.49</div>
<div class="ev d" style="left:1127px;top:708px;width:88px">76.49</div>
<div class="ev d" style="left:1216px;top:708px;width:88px">76.49</div>
<div class="ev d" style="left:1305px;top:708px;width:88px">76.49</div>
<div class="ev d" style="left:1394px;top:708px;width:88px">76.49</div>
<div class="ev d" style="left:1483px;top:708px;width:88px">76.49</div>
<div class="ev d" style="left:1572px;top:708px;width:88px">76.49</div>
<div class="ev d" style="left:1661px;top:708px;width:88px">76.49</div>
<div class="ev d" style="left:1750px;top:708px;width:100px">76.49</div>
<div class="ev d" style="left:504px;top:745px;width:88px">83.69</div>
<div class="ev d" style="left:593px;top:745px;width:88px">83.69</div>
<div class="ev d" style="left:682px;top:745px;width:88px">83.69</div>
<div class="ev d" style="left:771px;top:745px;width:88px">83.69</div>
<div class="ev d" style="left:860px;top:745px;width:88px">83.69</div>
<div class="ev d" style="left:949px;top:745px;width:88px">83.69</div>
<div class="ev d" style="left:1038px;top:745px;width:88px">83.69</div>
<div class="ev d" style="left:1127px;top:745px;width:88px">83.69</div>
<div class="ev d" style="left:1216px;top:745px;width:88px">83.69</div>
<div class="ev d" style="left:1305px;top:745px;width:88px">83.69</div>
<div class="ev d" style="left:1394px;top:745px;width:88px">83.69</div>
<div class="ev d" style="left:1483px;top:745px;width:88px">83.69</div>
<div class="ev d" style="left:1572px;top:745px;width:88px">83.69</div>
<div class="ev d" style="left:1661px;top:745px;width:88px">83.69</div>
<div class="ev d" style="left:1750px;top:745px;width:100px">83.69</div>
<div class="ev c" style="left:504px;top:819px;width:88px">89.99</div>
<div class="ev c" style="left:593px;top:819px;width:88px">89.99</div>
<div class="ev c" style="left:682px;top:819px;width:88px">89.99</div>
<div class="ev c" style="left:771px;top:819px;width:88px">89.99</div>
<div class="ev c" style="left:860px;top:819px;width:88px">89.99</div>
<div class="ev c" style="left:949px;top:819px;width:88px">89.99</div>
<div class="ev c" style="left:1038px;top:819px;width:88px">89.99</div>
<div class="ev c" style="left:1127px;top:819px;width:88px">89.99</div>
<div class="ev c" style="left:1216px;top:819px;width:88px">89.99</div>
<div class="ev c" style="left:1305px;top:819px;width:88px">89.99</div>
<div class="ev c" style="left:1394px;top:819px;width:88px">89.99</div>
<div class="ev c" style="left:1483px;top:819px;width:88px">89.99</div>
<div class="ev c" style="left:1572px;top:819px;width:88px">89.99</div>
<div class="ev c" style="left:1661px;top:819px;width:88px">89.99</div>
<div class="ev c" style="left:1750px;top:819px;width:100px">89.99</div>
<div class="ev d" style="left:504px;top:856px;width:88px">76.49</div>
<div class="ev d" style="left:593px;top:856px;width:88px">76.49</div>
<div class="ev d" style="left:682px;top:856px;width:88px">76.49</div>
<div class="ev d" style="left:771px;top:856px;width:88px">76.49</div>
<div class="ev d" style="left:860px;top:856px;width:88px">76.49</div>
<div class="ev d" style="left:949px;top:856px;width:88px">76.49</div>
<div class="ev d" style="left:1038px;top:856px;width:88px">76.49</div>
<div class="ev d" style="left:1127px;top:856px;width:88px">76.49</div>
<div class="ev d" style="left:1216px;top:856px;width:88px">76.49</div>
<div class="ev d" style="left:1305px;top:856px;width:88px">76.49</div>
<div class="ev d" style="left:1394px;top:856px;width:88px">76.49</div>
<div class="ev d" style="left:1483px;top:856px;width:88px">76.49</div>
<div class="ev d" style="left:1572px;top:856px;width:88px">76.49</div>
<div class="ev d" style="left:1661px;top:856px;width:88px">76.49</div>
<div class="ev d" style="left:1750px;top:856px;width:100px">76.49</div>
<div class="ev d" style="left:504px;top:893px;width:88px">83.69</div>
<div class="ev d" style="left:593px;top:893px;width:88px">83.69</div>
<div class="ev d" style="left:682px;top:893px;width:88px">83.69</div>
<div class="ev d" style="left:771px;top:893px;width:88px">83.69</div>
<div class="ev d" style="left:860px;top:893px;width:88px">83.69</div>
<div class="ev d" style="left:949px;top:893px;width:88px">83.69</div>
<div class="ev d" style="left:1038px;top:893px;width:88px">83.69</div>
<div class="ev d" style="left:1127px;top:893px;width:88px">83.69</div>
<div class="ev d" style="left:1216px;top:893px;width:88px">83.69</div>
<div class="ev d" style="left:1305px;top:893px;width:88px">83.69</div>
<div class="ev d" style="left:1394px;top:893px;width:88px">83.69</div>
<div class="ev d" style="left:1483px;top:893px;width:88px">83.69</div>
<div class="ev d" style="left:1572px;top:893px;width:88px">83.69</div>
<div class="ev d" style="left:1661px;top:893px;width:88px">83.69</div>
<div class="ev d" style="left:1750px;top:893px;width:100px">83.69</div>
<div style="left:1851px;top:302px;width:17px;height:643px;background:#cdcdcd;border-left:1px solid #b0b0b0"></div>
<div style="left:1851px;top:302px;width:17px;height:16px;background:#8a8a8a"></div>
<svg style="position:absolute;left:1855px;top:306px" width="9" height="6" viewBox="0 0 9 6"><path d="M1 5 L4.5 1.5 L8 5" fill="none" stroke="#b5b5b5" stroke-width="1.5"/></svg>
<div style="left:1851px;top:832px;width:17px;height:113px;background:#b3b3b3"></div>
<div id="sb"></div><div id="sbthumb"></div>
<svg style="position:absolute;left:1903px;top:13px" width="10" height="7" viewBox="0 0 10 7"><path d="M1 6 L5 2 L9 6" fill="none" stroke="#505050" stroke-width="1.8"/></svg>
<svg style="position:absolute;left:1903px;top:935px" width="10" height="7" viewBox="0 0 10 7"><path d="M1 1 L5 5 L9 1" fill="none" stroke="#505050" stroke-width="1.8"/></svg>
</body></html>
